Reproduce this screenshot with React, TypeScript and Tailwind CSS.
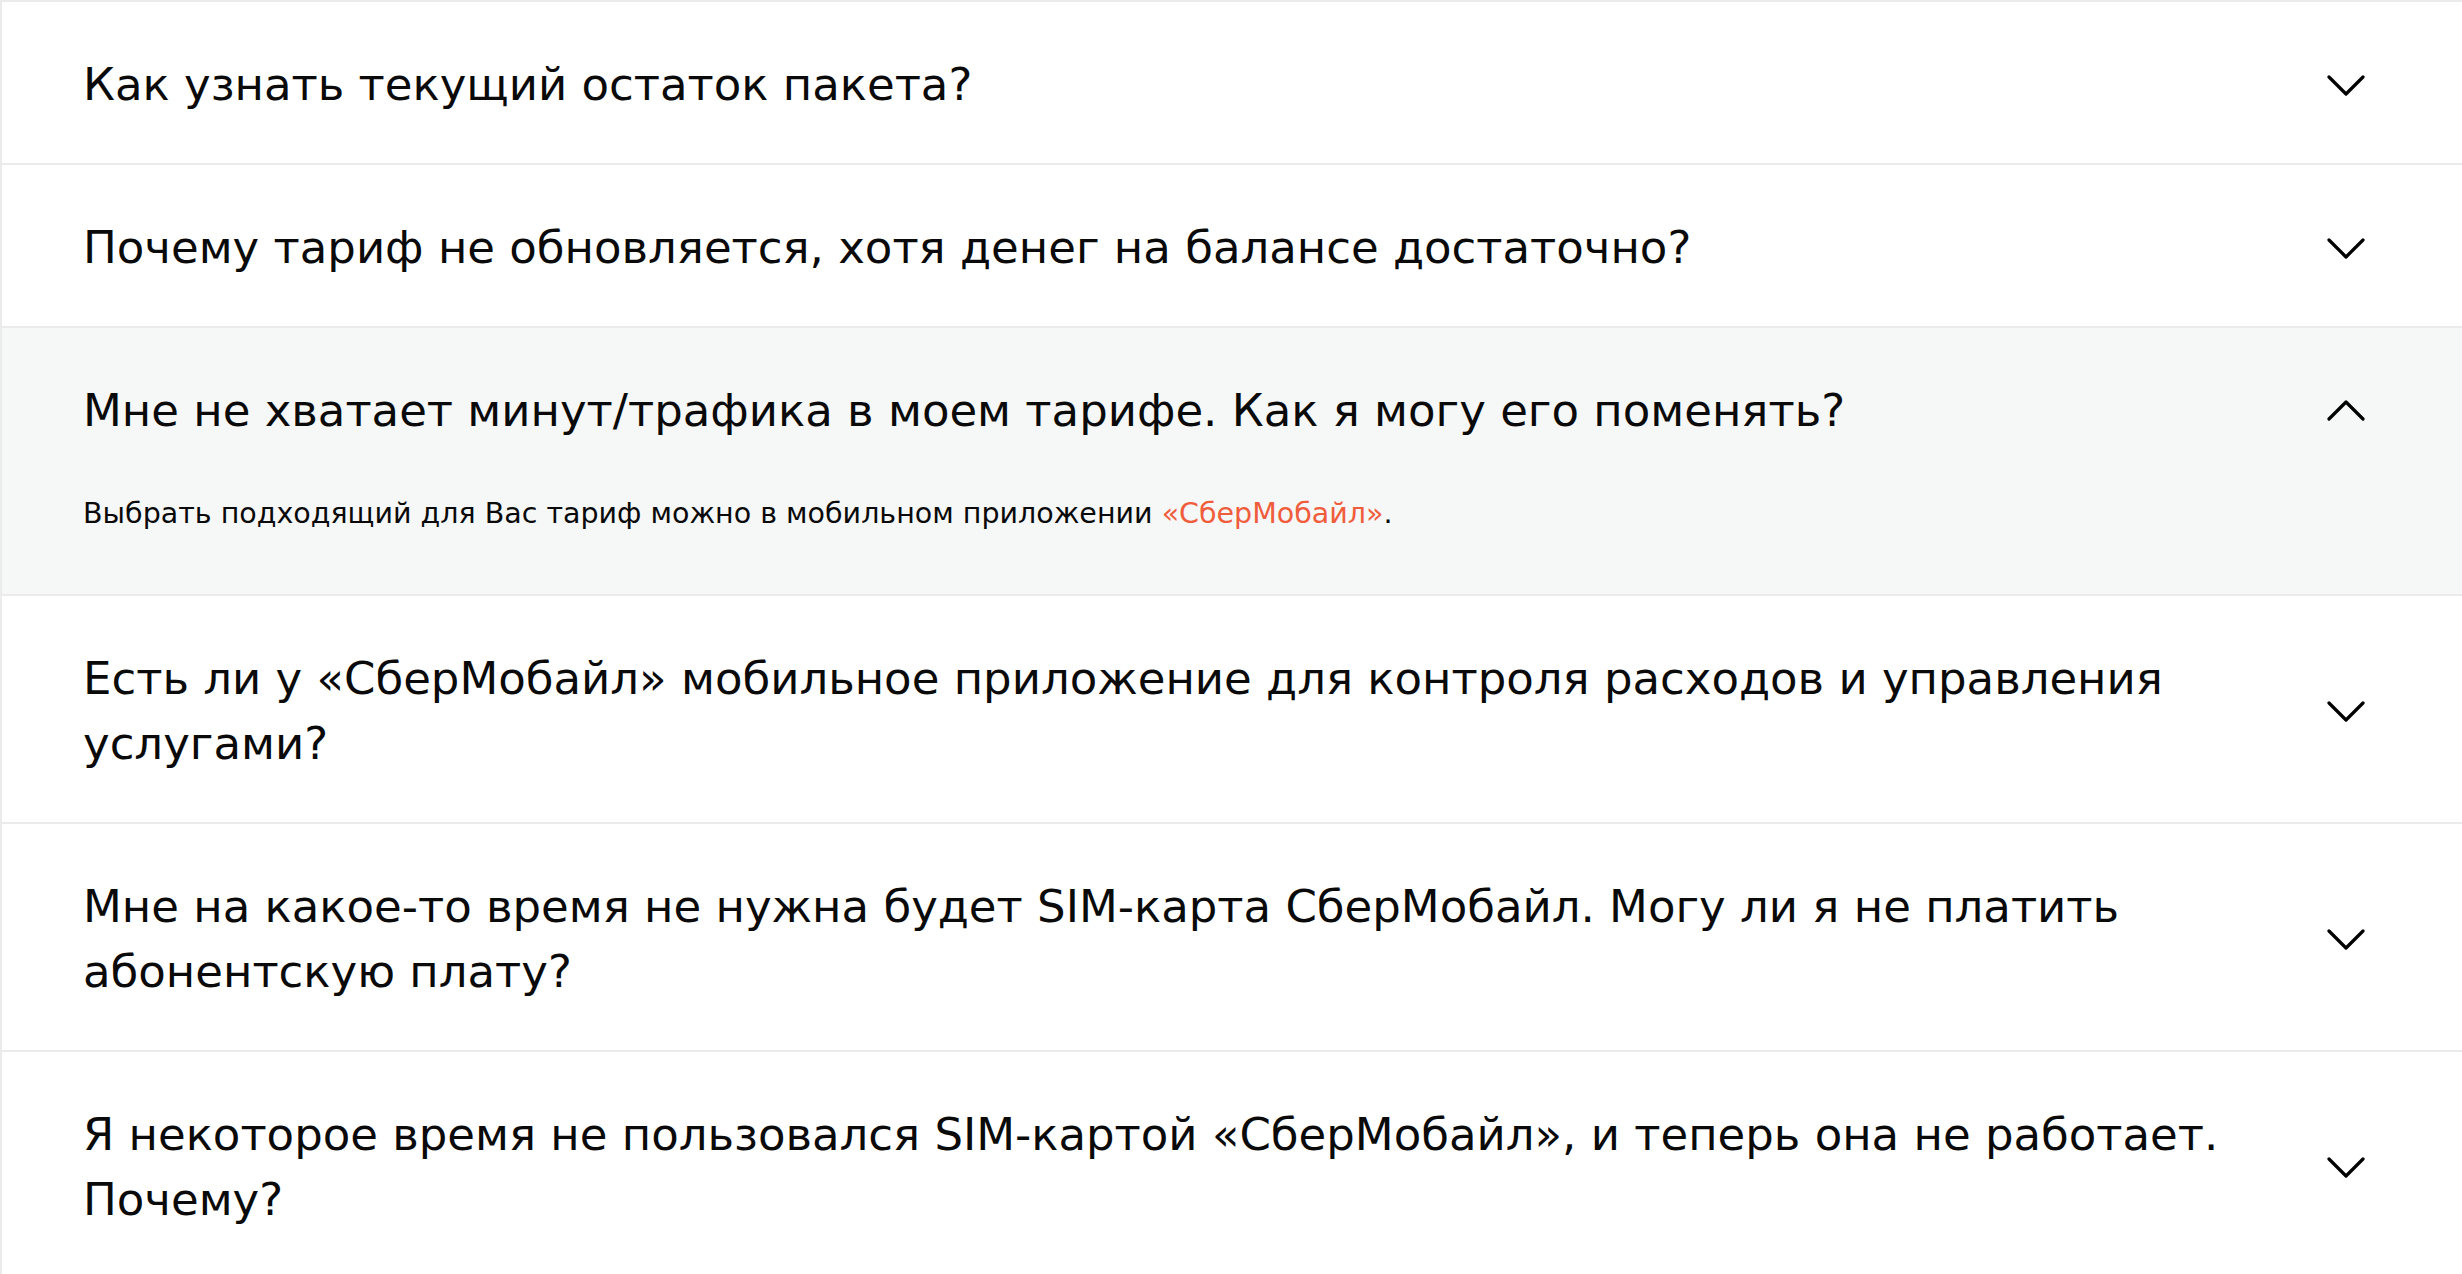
import { useState } from 'react'

const items = [
  { q: 'Как узнать текущий остаток пакета?' },
  { q: 'Почему тариф не обновляется, хотя денег на балансе достаточно?' },
  {
    q: 'Мне не хватает минут/трафика в моем тарифе. Как я могу его поменять?',
    a: true,
  },
  {
    q: 'Есть ли у «СберМобайл» мобильное приложение для контроля расходов и управления услугами?',
  },
  {
    q: 'Мне на какое-то время не нужна будет SIM-карта СберМобайл. Могу ли я не платить абонентскую плату?',
  },
  {
    q: 'Я некоторое время не пользовался SIM-картой «СберМобайл», и теперь она не работает. Почему?',
  },
]

function Chevron({ up }: { up: boolean }) {
  return (
    <svg width="38" height="22" viewBox="0 0 38 22" fill="none" className="shrink-0">
      <path
        d={up ? 'M2 19 L19 2 L36 19' : 'M2 3 L19 20 L36 3'}
        stroke="#000"
        strokeWidth="3.2"
        strokeLinecap="round"
        strokeLinejoin="round"
      />
    </svg>
  )
}

export default function App() {
  const [open, setOpen] = useState(2)

  return (
    <div
      className="min-h-screen bg-white text-[#0a0a0a]"
      style={{ fontFamily: '"DejaVu Sans", Verdana, sans-serif' }}
    >
      <div className="border-t-2 border-l-2 border-[#ebebeb]">
        {items.map((item, i) => {
          const isOpen = open === i
          return (
            <div
              key={i}
              className={`border-b-2 border-[#ebebeb] ${isOpen ? 'bg-[#f6f7f7]' : 'bg-white'}`}
            >
              <button
                type="button"
                onClick={() => setOpen(isOpen ? -1 : i)}
                className="w-full flex items-center text-left pl-[81px] pr-[97px] pt-[50px] pb-[46px]"
              >
                <span className="flex-1 text-[45px] leading-[65px] pr-[44px]">{item.q}</span>
                <Chevron up={isOpen} />
              </button>
              {isOpen && item.a && (
                <div className="pl-[81px] pr-[97px] pb-[59px] mt-[4px] text-[28.5px] leading-[42px]">
                  Выбрать подходящий для Вас тариф можно в мобильном приложении{' '}
                  <a href="#" className="text-[#f05d3c]">
                    «СберМобайл»
                  </a>
                  .
                </div>
              )}
            </div>
          )
        })}
      </div>
    </div>
  )
}
